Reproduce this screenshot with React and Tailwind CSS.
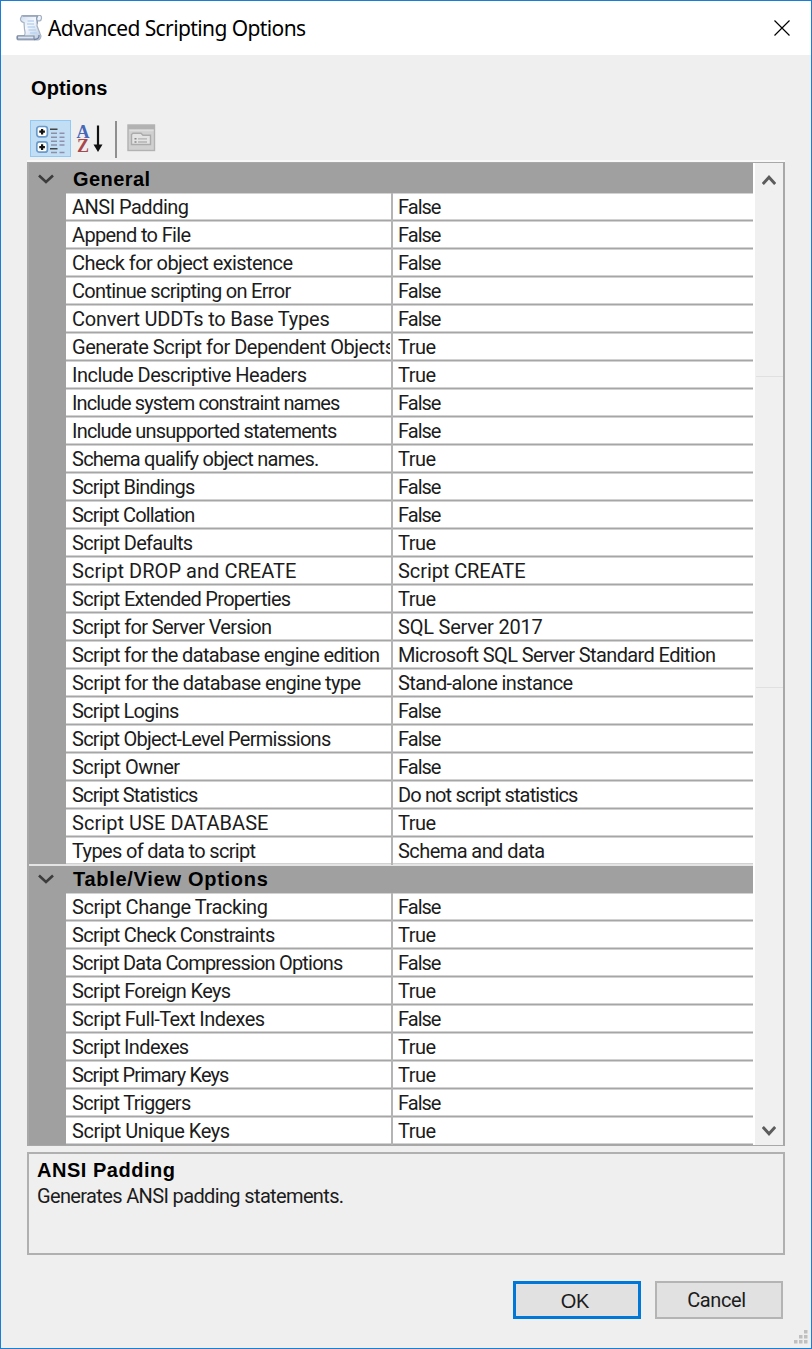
import React from "react";

const FONT = '"Roboto", "Liberation Sans", sans-serif';

// Name, rendered width of the name, value, rendered width of the value.
const general = [
  ["ANSI Padding", 116, "False", 42],
  ["Append to File", 118, "False", 42],
  ["Check for object existence", 220, "False", 42],
  ["Continue scripting on Error", 218, "False", 42],
  ["Convert UDDTs to Base Types", 257, "False", 42],
  ["Generate Script for Dependent Objects", 322, "True", 37],
  ["Include Descriptive Headers", 234, "True", 37],
  ["Include system constraint names", 267, "False", 42],
  ["Include unsupported statements", 264, "False", 42],
  ["Schema qualify object names.", 246, "True", 37],
  ["Script Bindings", 122, "False", 42],
  ["Script Collation", 122, "False", 42],
  ["Script Defaults", 120, "True", 37],
  ["Script DROP and CREATE", 224, "Script CREATE", 127],
  ["Script Extended Properties", 218, "True", 37],
  ["Script for Server Version", 199, "SQL Server 2017", 144],
  ["Script for the database engine edition", 307, "Microsoft SQL Server Standard Edition", 317],
  ["Script for the database engine type", 288, "Stand-alone instance", 174],
  ["Script Logins", 106, "False", 42],
  ["Script Object-Level Permissions", 258, "False", 42],
  ["Script Owner", 107, "False", 42],
  ["Script Statistics", 125, "Do not script statistics", 179],
  ["Script USE DATABASE", 196, "True", 37],
  ["Types of data to script", 183, "Schema and data", 146],
];

const tableView = [
  ["Script Change Tracking", 195, "False", 42],
  ["Script Check Constraints", 202, "True", 37],
  ["Script Data Compression Options", 270, "False", 42],
  ["Script Foreign Keys", 158, "True", 37],
  ["Script Full-Text Indexes", 192, "False", 42],
  ["Script Indexes", 116, "True", 37],
  ["Script Primary Keys", 156, "True", 37],
  ["Script Triggers", 118, "False", 42],
  ["Script Unique Keys", 157, "True", 37],
];

// Spreads the letters of a label so that it fills exactly the given width.
function Fit({ w, children, className = "" }) {
  const ref = React.useRef(null);
  const [spacing, setSpacing] = React.useState(0);
  React.useLayoutEffect(() => {
    const natural = ref.current.getBoundingClientRect().width;
    setSpacing((w + 0.5 - natural) / children.length);
  }, []);
  return (
    <span ref={ref} className={`inline-block whitespace-pre ${className}`} style={{ letterSpacing: `${spacing}px` }}>
      {children}
    </span>
  );
}

function Row({ item }) {
  const [name, nameW, value, valueW] = item;
  return (
    <div className="flex h-7 bg-white text-[20px] leading-[28px] text-[#1c1c1c] shadow-[inset_0_-1px_0_#a6a6a6,inset_0_-2px_0_#d2d2d2,inset_0_1px_0_#d2d2d2]">
      <div className="mr-[1px] w-[324px] shrink-0 overflow-hidden pl-[6px]">
        <Fit w={nameW}>{name}</Fit>
      </div>
      <div className="w-[2px] shrink-0 bg-[#b4b4b4]" />
      <div className="pl-[5px]">
        <Fit w={valueW}>{value}</Fit>
      </div>
    </div>
  );
}

function Group({ title, width, rows, first }) {
  return (
    <section>
      <div className={`flex items-center ${first ? "h-[30px] pt-[2px]" : "h-7 shadow-[inset_0_1px_0_#e4e4e4,0_-1px_0_#e4e4e4]"}`}>
        <svg className="ml-[9px] h-[10px] w-4" viewBox="0 0 16 10" fill="none">
          <path d="M1 1.500 8 8 15 1.500" stroke="#3c3c3c" strokeWidth="2.600" />
        </svg>
        <Fit w={width} className="ml-[19px] font-['Liberation_Sans',sans-serif] text-[20px] font-bold leading-[28px] text-black">{title}</Fit>
      </div>
      <div className="pl-[37px]">
        {rows.map((r) => (
          <Row key={r[0]} item={r} />
        ))}
      </div>
    </section>
  );
}

function ScriptIcon() {
  return (
    <svg className="h-7 w-7" viewBox="0 0 28 28">
      <defs>
        <linearGradient id="paper" x1="0" y1="0" x2="1" y2="1">
          <stop offset="0" stopColor="#c9d6ea" />
          <stop offset=".45" stopColor="#f4f9ff" />
          <stop offset="1" stopColor="#b4c4dc" />
        </linearGradient>
      </defs>
      <path d="M7 1.500h18.500c1.600 1 1.400 5-.8 5.300h-2.200l-.5 5L25 19.500c2.500 3.500-.5 6.500-2 6.500H4c-3 0-3-4.500 0-4.500h5.500c1.500-2 .5-4 0-6L9 8.500C7 8.500 5 6.500 5.500 4.500z" fill="url(#paper)" stroke="#a7b2c3" strokeWidth="1.200" />
      <path d="M7.500 2.200h15.500c-2 1-1.500 3-1 4.500l.5 3" fill="none" stroke="#8f9db3" strokeWidth="1.300" />
      <path d="M12.500 7h6.500M12 10h7M12.500 13h7.500M13.500 16h7.500M15 19h7" stroke="#bcd4f1" strokeWidth="1.500" />
      <path d="M2.500 22h16.500v3.200H2.500z" fill="#dce6f3" stroke="#7f8da6" strokeWidth="1.200" />
      <path d="M19 25.500c3 0 5.500-1 5-4.500" stroke="#7183a0" strokeWidth="1.300" fill="none" />
    </svg>
  );
}

function CategorizedIcon() {
  return (
    <svg className="h-[36px] w-[39px]" viewBox="0 0 39 36">
      {[5.500, 20.900].map((y) => (
        <g key={y}>
          <rect x="5.800" y={y} width="10.600" height="10.300" rx="2.500" fill="#fff" stroke="#6a9bcb" strokeWidth="1.700" />
          <path d={`M8.300 ${y + 5.200}h5.600M11.100 ${y + 2.400}v5.600`} stroke="#111" strokeWidth="2.200" />
        </g>
      ))}
      <path d="M19 8.300h7.500M19 27.700h7.500" stroke="#444" strokeWidth="1.600" />
      <path d="M20 12.300h6M20 16.300h6M20 20.300h6M20 24h6M20 31.500h6" stroke="#8b90a5" strokeWidth="1.400" />
      <path d="M28.500 12.300h5M28.500 16.300h5M28.500 20.300h5M28.500 24h5M28.500 31.500h5" stroke="#8f8fae" strokeWidth="1.400" />
    </svg>
  );
}

function SortIcon() {
  return (
    <div className="flex h-[36px] w-[30px]">
      <div className="flex w-[14px] flex-col items-center pt-[5px] font-['Liberation_Serif',serif] text-[18px] font-bold leading-[14px]">
        <span className="text-[#4668b9]">A</span>
        <span className="text-[#a8484c]">Z</span>
      </div>
      <svg className="h-[36px] w-[14px]" viewBox="0 0 14 36">
        <path d="M8 5.500v22" stroke="#111" strokeWidth="2.200" />
        <path d="M3.500 24.500h9L8 32z" fill="#111" />
      </svg>
    </div>
  );
}

function PagesIcon() {
  return (
    <svg className="h-[28px] w-[29px]" viewBox="0 0 29 28">
      <rect x="1" y="1" width="26.500" height="25.500" fill="#d0d0d0" stroke="#b2b2b2" strokeWidth="1.400" />
      <path d="M1 3.200h26.500" stroke="#b2b2b2" strokeWidth="4" />
      <path d="M2.500 6.500h24" stroke="#dedede" strokeWidth="1.500" />
      <path d="M4.500 20.500V10.500l1.500-1.300h8l2 2h7.500v9.300z" fill="#e3e3e3" stroke="#ababab" strokeWidth="1.400" />
      <path d="M7.500 14.800h2M7.500 18h2" stroke="#888" strokeWidth="1.500" />
      <path d="M11 14.800h9M11 18h9" stroke="#b2b2b2" strokeWidth="1.300" />
    </svg>
  );
}

const grip = [[11, 1], [6, 6], [11, 6], [1, 11], [6, 11], [11, 11]];

export default function App() {
  return (
    <div className="flex h-[1349px] w-[812px] flex-col border border-[#1a7fd4] bg-[#efefef]" style={{ fontFamily: FONT }}>
      <header className="flex h-[54px] shrink-0 items-center bg-white pl-[14px] pr-[21px]">
        <ScriptIcon />
        <Fit w={257} className="ml-[5px] font-['Noto_Sans',sans-serif] text-[21px] leading-[54px] text-black">Advanced Scripting Options</Fit>
        <svg className="ml-auto h-4 w-4" viewBox="0 0 16 16">
          <path d="M.5.500l15 15M15.500.500l-15 15" stroke="#000" strokeWidth="1.200" />
        </svg>
      </header>

      <h1 className="mt-[19px] h-[28px] pl-[30px] font-['Liberation_Sans',sans-serif] text-[20px] font-bold leading-[28px] text-black">
        <Fit w={76}>Options</Fit>
      </h1>

      <div className="mt-[18px] flex h-[37px] shrink-0 pl-[29px]">
        <div className="h-[37px] w-[41px] border border-[#90c8f6] bg-[#c2def5]">
          <CategorizedIcon />
        </div>
        <div className="ml-[5px]">
          <SortIcon />
        </div>
        <div className="ml-[9px] mt-[1px] h-[37px] w-[2px] bg-[#8f8f8f]" />
        <div className="ml-[10px] mt-[4px]">
          <PagesIcon />
        </div>
      </div>

      <div className="ml-[26px] mt-[5px] flex h-[984px] w-[758px] shrink-0 border-x-2 border-y border-[#a8a8a8] bg-[#a0a0a0] shadow-[0_-2px_0_#f8f8f8]">
        <div className="w-[724px] shrink-0">
          <Group title="General" width={77} rows={general} first />
          <Group title="Table/View Options" width={195} rows={tableView} />
        </div>
        <div className="flex w-[30px] flex-col items-center border-l-2 border-white bg-[#f0f0f0] pt-[12px]">
          <svg className="h-[10px] w-[14px]" viewBox="0 0 14 10" fill="none">
            <path d="M.8 9 7 2.300 13.200 9" stroke="#5c5c5c" strokeWidth="3" />
          </svg>
          <div className="mt-[191px] h-[312px] w-[27px] border-y border-[#e0e0e0]" />
          <svg className="mt-[438px] h-[10px] w-[14px]" viewBox="0 0 14 10" fill="none">
            <path d="M.8 1 7 7.700 13.200 1" stroke="#5c5c5c" strokeWidth="3" />
          </svg>
        </div>
      </div>

      <div className="ml-[26px] mt-[6px] h-[103px] w-[758px] shrink-0 border-2 border-[#b0b0b0] pl-[8px] pt-[2px] text-[20px] text-[#1c1c1c]">
        <div className="h-[27px] font-['Liberation_Sans',sans-serif] font-bold leading-[28px] text-black">
          <Fit w={138}>ANSI Padding</Fit>
        </div>
        <div className="leading-[26px]">
          <Fit w={306}>Generates ANSI padding statements.</Fit>
        </div>
      </div>

      <footer className="mt-[26px] flex gap-[14px] pl-[512px] text-[20px] text-[#1c1c1c]">
        <button className="h-[38px] w-[128px] border-[3px] border-[#0078d7] bg-[#e1e1e1] pr-[4px] leading-[34px]">
          <Fit w={28} className="font-['Liberation_Sans',sans-serif]">OK</Fit>
        </button>
        <button className="h-[38px] w-[128px] border-2 border-[#b4b4b4] bg-[#e1e1e1] pr-[5px] leading-[34px]">
          <Fit w={58}>Cancel</Fit>
        </button>
      </footer>
      <svg className="ml-auto mr-[2px] mt-[10px] h-[16px] w-[16px] shrink-0" viewBox="0 0 16 16">
        {grip.map(([x, y]) => (
          <rect key={`${x}-${y}`} x={x} y={y} width="3.500" height="3.500" fill="#bfbfbf" />
        ))}
      </svg>
    </div>
  );
}
